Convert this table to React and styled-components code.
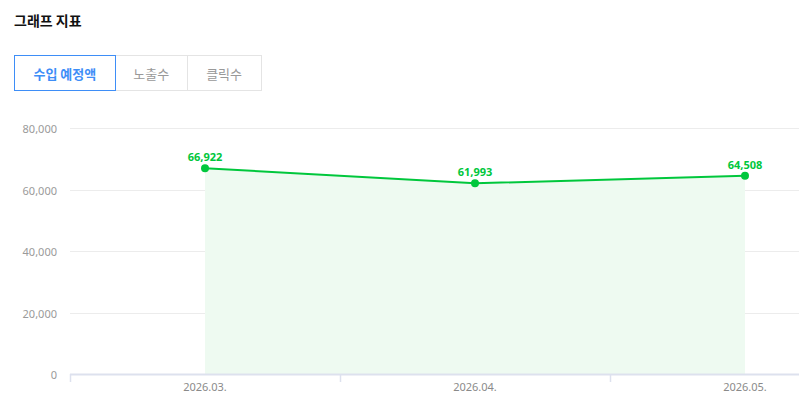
import React, { useState } from "react";
import styled, { createGlobalStyle } from "styled-components";

const Global = createGlobalStyle`
  html, body { margin: 0; padding: 0; background: #fff; }
  body { font-family: "Noto Sans CJK KR", "Noto Sans", sans-serif; overflow: hidden; }
`;

const Page = styled.div`
  width: 799px;
  height: 411px;
  overflow: hidden;
  box-sizing: border-box;
  padding: 10px 0 0 14px;
`;

const Title = styled.h2`
  margin: 0;
  font-size: 14px;
  font-weight: 700;
  color: #111;
  line-height: 20px;
`;

const Tabs = styled.div`
  display: flex;
  margin-top: 25px;
`;

const Tab = styled.button`
  height: 36px;
  box-sizing: border-box;
  padding: 0 ${(p) => p.$pad}px;
  background: #fff;
  font-family: inherit;
  font-size: 13px;
  font-weight: ${(p) => (p.$active ? 700 : 400)};
  color: ${(p) => (p.$active ? "#3e8ef7" : "#999")};
  border: 1px solid ${(p) => (p.$active ? "#3e8ef7" : "#e4e4e4")};
  margin-left: ${(p) => (p.$first ? 0 : -1)}px;
  position: relative;
  z-index: ${(p) => (p.$active ? 1 : 0)};
  cursor: pointer;
`;

const ChartBox = styled.div`
  margin: 9px 0 0 -14px;
  width: 799px;
  height: 311px;
`;

const GREEN = "#00c73c";
const data = [
  { label: "2026.03.", value: 66922, x: 205 },
  { label: "2026.04.", value: 61993, x: 475 },
  { label: "2026.05.", value: 64508, x: 745 },
];
const yOf = (v) => 374 - (v / 80000) * 246;

function Chart() {
  const ticks = [0, 20000, 40000, 60000, 80000];
  const pts = data.map((d) => [d.x, yOf(d.value)]);
  const linePath = pts.map((p, i) => `${i ? "L" : "M"}${p[0]},${p[1]}`).join(" ");
  const areaPath = `${linePath} L745,374 L205,374 Z`;
  return (
    <svg width="799" height="311" viewBox="0 100 799 311">
      {ticks.map((t) => {
        const y = Math.round(yOf(t)) + 0.5;
        return (
          <g key={t}>
            {t !== 0 && <line x1="70" x2="799" y1={y} y2={y} stroke="#ececec" strokeWidth="1" />}
            <text x="57" y={y + 4} textAnchor="end" fontSize="11" fill="#9a9a9a" fontFamily="'Noto Sans', sans-serif">
              {t.toLocaleString("en-US")}
            </text>
          </g>
        );
      })}
      <path d={areaPath} fill="#eefaf1" />
      <line x1="70" x2="799" y1="374.5" y2="374.5" stroke="#dde1ee" strokeWidth="2" />
      {[70.5, 340.5, 610.5].map((x) => (
        <line key={x} x1={x} x2={x} y1="374" y2="382" stroke="#dde1ee" strokeWidth="1.5" />
      ))}
      {data.map((d) => (
        <text key={d.label} x={d.x} y="391" textAnchor="middle" fontSize="11" fill="#8a8a8a" fontFamily="'Noto Sans', sans-serif">
          {d.label}
        </text>
      ))}
      <path d={linePath} fill="none" stroke={GREEN} strokeWidth="2" />
      {pts.map((p, i) => (
        <g key={i}>
          <circle cx={p[0]} cy={p[1]} r="4" fill={GREEN} />
          <text x={p[0]} y={p[1] - 7} textAnchor="middle" fontSize="11" fontWeight="700" fill={GREEN} fontFamily="'Noto Sans', sans-serif">
            {data[i].value.toLocaleString("en-US")}
          </text>
        </g>
      ))}
    </svg>
  );
}

export default function App() {
  const [active, setActive] = useState(0);
  const tabs = [
    { name: "수입 예정액", pad: 18.5 },
    { name: "노출수", pad: 17.5 },
    { name: "클릭수", pad: 18.5 },
  ];
  return (
    <Page>
      <Global />
      <Title>그래프 지표</Title>
      <Tabs>
        {tabs.map((t, i) => (
          <Tab key={t.name} $first={i === 0} $active={i === active} $pad={t.pad} onClick={() => setActive(i)}>
            {t.name}
          </Tab>
        ))}
      </Tabs>
      <ChartBox>
        <Chart />
      </ChartBox>
    </Page>
  );
}
